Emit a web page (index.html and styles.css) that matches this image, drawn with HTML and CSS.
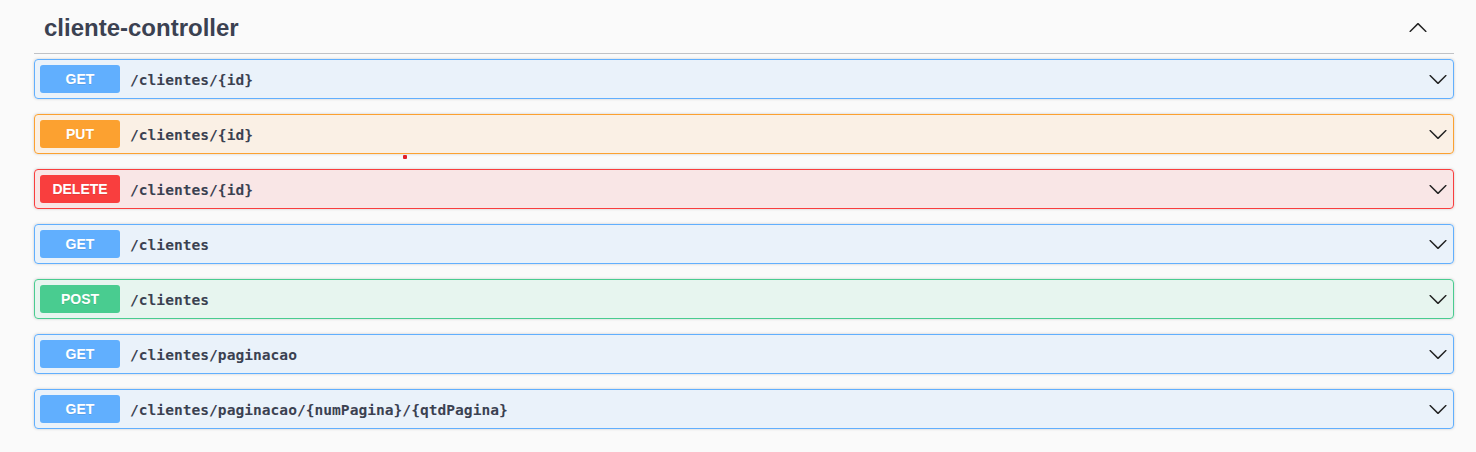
FILE: index.html
```html
<!DOCTYPE html>
<html lang="pt">
<head>
<meta charset="utf-8">
<title>cliente-controller</title>
<link rel="stylesheet" href="styles.css">
</head>
<body>
<div class="wrapper">
  <section class="tag-section">
    <h3 class="tag-header">
      <span class="tag-name">cliente-controller</span>
      <svg class="arrow arrow-up" width="20" height="20" viewBox="0 0 20 20" aria-hidden="true"><path d="M17.418 6.109c.272-.268.709-.268.979 0s.271.701 0 .969l-7.908 7.83c-.27.268-.707.268-.979 0l-7.908-7.83c-.27-.268-.27-.701 0-.969.271-.268.709-.268.979 0L10 13.25l7.418-7.141z"/></svg>
    </h3>
    <div class="opblocks">
      <div class="opblock get"><span class="method">GET</span><span class="path">/clientes/{id}</span><svg class="arrow" width="20" height="20" viewBox="0 0 20 20"><path d="M17.418 6.109c.272-.268.709-.268.979 0s.271.701 0 .969l-7.908 7.83c-.27.268-.707.268-.979 0l-7.908-7.830c-.27-.268-.27-.701 0-.969.271-.268.709-.268.979 0L10 13.25l7.418-7.141z"/></svg></div>
      <div class="opblock put"><span class="method">PUT</span><span class="path">/clientes/{id}</span><svg class="arrow" width="20" height="20" viewBox="0 0 20 20"><path d="M17.418 6.109c.272-.268.709-.268.979 0s.271.701 0 .969l-7.908 7.83c-.27.268-.707.268-.979 0l-7.908-7.83c-.27-.268-.27-.701 0-.969.271-.268.709-.268.979 0L10 13.25l7.418-7.141z"/></svg></div>
      <div class="opblock delete"><span class="method">DELETE</span><span class="path">/clientes/{id}</span><svg class="arrow" width="20" height="20" viewBox="0 0 20 20"><path d="M17.418 6.109c.272-.268.709-.268.979 0s.271.701 0 .969l-7.908 7.83c-.27.268-.707.268-.979 0l-7.908-7.83c-.27-.268-.27-.701 0-.969.271-.268.709-.268.979 0L10 13.25l7.418-7.141z"/></svg></div>
      <div class="opblock get"><span class="method">GET</span><span class="path">/clientes</span><svg class="arrow" width="20" height="20" viewBox="0 0 20 20"><path d="M17.418 6.109c.272-.268.709-.268.979 0s.271.701 0 .969l-7.908 7.83c-.27.268-.707.268-.979 0l-7.908-7.83c-.27-.268-.27-.701 0-.969.271-.268.709-.268.979 0L10 13.25l7.418-7.141z"/></svg></div>
      <div class="opblock post"><span class="method">POST</span><span class="path">/clientes</span><svg class="arrow" width="20" height="20" viewBox="0 0 20 20"><path d="M17.418 6.109c.272-.268.709-.268.979 0s.271.701 0 .969l-7.908 7.83c-.27.268-.707.268-.979 0l-7.908-7.83c-.27-.268-.27-.701 0-.969.271-.268.709-.268.979 0L10 13.25l7.418-7.141z"/></svg></div>
      <div class="opblock get"><span class="method">GET</span><span class="path">/clientes/paginacao</span><svg class="arrow" width="20" height="20" viewBox="0 0 20 20"><path d="M17.418 6.109c.272-.268.709-.268.979 0s.271.701 0 .969l-7.908 7.83c-.27.268-.707.268-.979 0l-7.908-7.83c-.27-.268-.27-.701 0-.969.271-.268.709-.268.979 0L10 13.25l7.418-7.141z"/></svg></div>
      <div class="opblock get"><span class="method">GET</span><span class="path">/clientes/paginacao/{numPagina}/{qtdPagina}</span><svg class="arrow" width="20" height="20" viewBox="0 0 20 20"><path d="M17.418 6.109c.272-.268.709-.268.979 0s.271.701 0 .969l-7.908 7.83c-.27.268-.707.268-.979 0l-7.908-7.83c-.27-.268-.27-.701 0-.969.271-.268.709-.268.979 0L10 13.25l7.418-7.141z"/></svg></div>
    </div>
  </section>
</div>
<span class="stray-dot"></span>
</body>
</html>
```

FILE: styles.css
```css
* { box-sizing: border-box; }

html, body {
  margin: 0;
  padding: 0;
  background: #fafafa;
}

body {
  font-family: "Liberation Sans", Arial, sans-serif;
  color: #3b4151;
  position: relative;
  min-height: 452px;
}

.wrapper {
  margin: 0 22px 0 34px;
}

.tag-header {
  display: flex;
  align-items: center;
  margin: 0 0 5px 0;
  padding: 14px 26px 12px 10px;
  border-bottom: 1px solid rgba(59, 65, 81, 0.3);
  font-size: 24px;
  font-weight: bold;
  line-height: 27px;
  color: #3b4151;
}

.tag-name {
  flex: 1;
}

.arrow {
  display: block;
  flex: none;
  fill: #222;
}

.arrow-up {
  transform: rotate(180deg);
}

.opblocks {
  display: flex;
  flex-direction: column;
  gap: 15px;
}

.opblock {
  display: flex;
  align-items: center;
  height: 40px;
  padding: 5px 5px 5px 5px;
  border: 1px solid;
  border-radius: 4px;
  box-shadow: 0 0 3px rgba(0, 0, 0, 0.19);
}

.method {
  width: 80px;
  height: 28px;
  flex: none;
  display: flex;
  align-items: center;
  justify-content: center;
  border-radius: 3px;
  color: #fff;
  font-family: "Liberation Sans", Arial, sans-serif;
  font-weight: bold;
  font-size: 14px;
  text-shadow: 0 1px 0 rgba(0, 0, 0, 0.1);
}

.path {
  flex: 1;
  padding: 0 10px;
  font-family: "DejaVu Sans Mono", monospace;
  font-weight: bold;
  font-size: 14.6px;
  color: #3b4151;
}

.get { background: rgba(97, 175, 254, 0.1); border-color: #61affe; }
.get .method { background: #61affe; }

.put { background: rgba(252, 161, 48, 0.1); border-color: #fca130; }
.put .method { background: #fca130; }

.delete { background: rgba(249, 62, 62, 0.1); border-color: #f93e3e; }
.delete .method { background: #f93e3e; }

.post { background: rgba(73, 204, 144, 0.1); border-color: #49cc90; }
.post .method { background: #49cc90; }

.stray-dot {
  position: absolute;
  left: 403px;
  top: 155px;
  width: 4px;
  height: 4px;
  border-radius: 1px;
  background: #e0202a;
}
```
